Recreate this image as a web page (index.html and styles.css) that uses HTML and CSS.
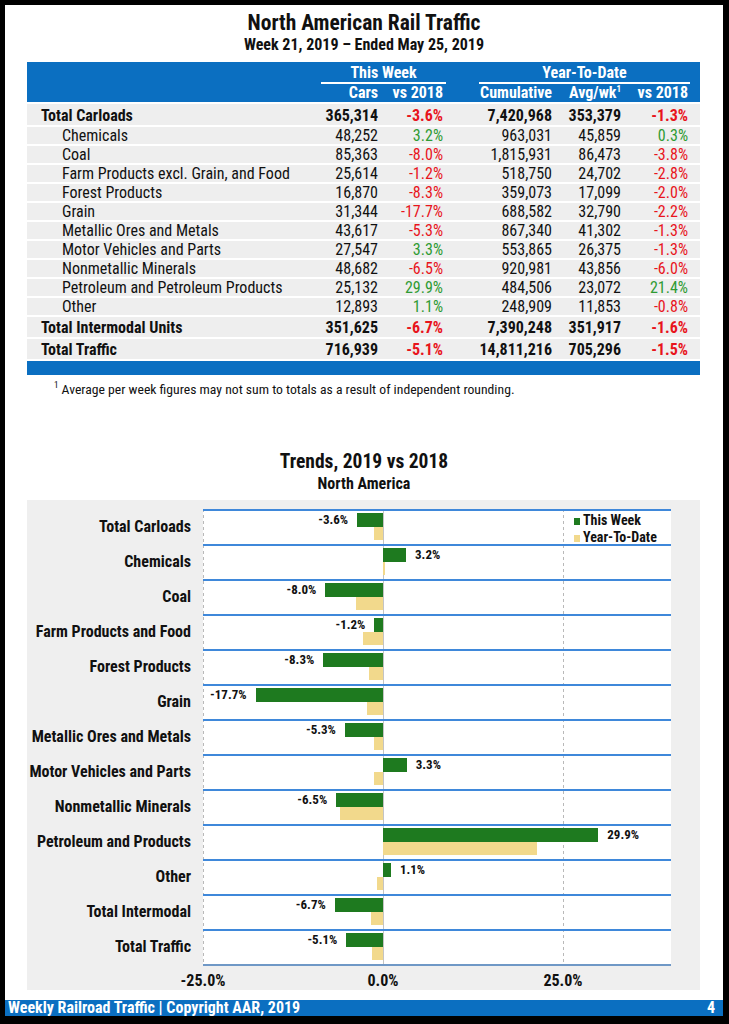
FILE: index.html
```html
<!DOCTYPE html>
<html lang="en">
<head>
<meta charset="utf-8">
<title>North American Rail Traffic</title>
<link rel="stylesheet" href="styles.css">
</head>
<body>
<div class="page">
  <h1 class="title">North American Rail Traffic</h1>
  <div class="subtitle">Week 21, 2019 – Ended May 25, 2019</div>

  <div class="table">
    <div class="thead">
      <div class="hrow1 cols">
        <div class="grp grp-week">This Week</div>
        <div class="grp grp-ytd">Year-To-Date</div>
      </div>
      <div class="hrow2 cols">
        <span></span>
        <span class="num">Cars</span>
        <span class="num">vs 2018</span>
        <span class="num">Cumulative</span>
        <span class="num">Avg/wk<sup>1</sup></span>
        <span class="num">vs 2018</span>
      </div>
    </div>
    <div class="tbody">
      <div class="row cols total tc"><span>Total Carloads</span><span class="num">365,314</span><span class="num neg">-3.6%</span><span class="num">7,420,968</span><span class="num">353,379</span><span class="num neg">-1.3%</span></div>
      <div class="row cols sub"><span>Chemicals</span><span class="num">48,252</span><span class="num pos">3.2%</span><span class="num">963,031</span><span class="num">45,859</span><span class="num pos">0.3%</span></div>
      <div class="row cols sub"><span>Coal</span><span class="num">85,363</span><span class="num neg">-8.0%</span><span class="num">1,815,931</span><span class="num">86,473</span><span class="num neg">-3.8%</span></div>
      <div class="row cols sub"><span>Farm Products excl. Grain, and Food</span><span class="num">25,614</span><span class="num neg">-1.2%</span><span class="num">518,750</span><span class="num">24,702</span><span class="num neg">-2.8%</span></div>
      <div class="row cols sub"><span>Forest Products</span><span class="num">16,870</span><span class="num neg">-8.3%</span><span class="num">359,073</span><span class="num">17,099</span><span class="num neg">-2.0%</span></div>
      <div class="row cols sub"><span>Grain</span><span class="num">31,344</span><span class="num neg">-17.7%</span><span class="num">688,582</span><span class="num">32,790</span><span class="num neg">-2.2%</span></div>
      <div class="row cols sub"><span>Metallic Ores and Metals</span><span class="num">43,617</span><span class="num neg">-5.3%</span><span class="num">867,340</span><span class="num">41,302</span><span class="num neg">-1.3%</span></div>
      <div class="row cols sub"><span>Motor Vehicles and Parts</span><span class="num">27,547</span><span class="num pos">3.3%</span><span class="num">553,865</span><span class="num">26,375</span><span class="num neg">-1.3%</span></div>
      <div class="row cols sub"><span>Nonmetallic Minerals</span><span class="num">48,682</span><span class="num neg">-6.5%</span><span class="num">920,981</span><span class="num">43,856</span><span class="num neg">-6.0%</span></div>
      <div class="row cols sub"><span>Petroleum and Petroleum Products</span><span class="num">25,132</span><span class="num pos">29.9%</span><span class="num">484,506</span><span class="num">23,072</span><span class="num pos">21.4%</span></div>
      <div class="row cols sub"><span>Other</span><span class="num">12,893</span><span class="num pos">1.1%</span><span class="num">248,909</span><span class="num">11,853</span><span class="num neg">-0.8%</span></div>
      <div class="row cols total"><span>Total Intermodal Units</span><span class="num">351,625</span><span class="num neg">-6.7%</span><span class="num">7,390,248</span><span class="num">351,917</span><span class="num neg">-1.6%</span></div>
      <div class="row cols total"><span>Total Traffic</span><span class="num">716,939</span><span class="num neg">-5.1%</span><span class="num">14,811,216</span><span class="num">705,296</span><span class="num neg">-1.5%</span></div>
    </div>
    <div class="tfoot"></div>
  </div>
  <p class="footnote"><sup>1</sup> Average per week figures may not sum to totals as a result of independent rounding.</p>

  <h2 class="chart-title">Trends, 2019 vs 2018</h2>
  <div class="chart-sub">North America</div>

  <div class="chart">
    <div class="chart-grid">
      <div class="cats">
        <div class="cat">Total Carloads</div>
        <div class="cat">Chemicals</div>
        <div class="cat">Coal</div>
        <div class="cat">Farm Products and Food</div>
        <div class="cat">Forest Products</div>
        <div class="cat">Grain</div>
        <div class="cat">Metallic Ores and Metals</div>
        <div class="cat">Motor Vehicles and Parts</div>
        <div class="cat">Nonmetallic Minerals</div>
        <div class="cat">Petroleum and Products</div>
        <div class="cat">Other</div>
        <div class="cat">Total Intermodal</div>
        <div class="cat">Total Traffic</div>
      </div>
      <div class="plot">
        <div class="legend">
          <div class="leg"><i class="sw wk"></i>This Week</div>
          <div class="leg"><i class="sw ytd"></i>Year-To-Date</div>
        </div>
        <div class="band">
          <div class="track neg"><span class="val">-3.6%</span><i class="bar wk" style="width:25.92px"></i></div>
          <div class="track neg"><i class="bar ytd" style="width:9.36px"></i></div>
        </div>
        <div class="band">
          <div class="track pos"><i class="bar wk" style="width:23.04px"></i><span class="val">3.2%</span></div>
          <div class="track pos"><i class="bar ytd" style="width:2.16px"></i></div>
        </div>
        <div class="band">
          <div class="track neg"><span class="val">-8.0%</span><i class="bar wk" style="width:57.6px"></i></div>
          <div class="track neg"><i class="bar ytd" style="width:27.36px"></i></div>
        </div>
        <div class="band">
          <div class="track neg"><span class="val">-1.2%</span><i class="bar wk" style="width:8.64px"></i></div>
          <div class="track neg"><i class="bar ytd" style="width:20.16px"></i></div>
        </div>
        <div class="band">
          <div class="track neg"><span class="val">-8.3%</span><i class="bar wk" style="width:59.76px"></i></div>
          <div class="track neg"><i class="bar ytd" style="width:14.4px"></i></div>
        </div>
        <div class="band">
          <div class="track neg"><span class="val">-17.7%</span><i class="bar wk" style="width:127.44px"></i></div>
          <div class="track neg"><i class="bar ytd" style="width:15.84px"></i></div>
        </div>
        <div class="band">
          <div class="track neg"><span class="val">-5.3%</span><i class="bar wk" style="width:38.16px"></i></div>
          <div class="track neg"><i class="bar ytd" style="width:9.36px"></i></div>
        </div>
        <div class="band">
          <div class="track pos"><i class="bar wk" style="width:23.76px"></i><span class="val">3.3%</span></div>
          <div class="track neg"><i class="bar ytd" style="width:9.36px"></i></div>
        </div>
        <div class="band">
          <div class="track neg"><span class="val">-6.5%</span><i class="bar wk" style="width:46.8px"></i></div>
          <div class="track neg"><i class="bar ytd" style="width:43.2px"></i></div>
        </div>
        <div class="band">
          <div class="track pos"><i class="bar wk" style="width:215.28px"></i><span class="val">29.9%</span></div>
          <div class="track pos"><i class="bar ytd" style="width:154.08px"></i></div>
        </div>
        <div class="band">
          <div class="track pos"><i class="bar wk" style="width:7.92px"></i><span class="val">1.1%</span></div>
          <div class="track neg"><i class="bar ytd" style="width:5.76px"></i></div>
        </div>
        <div class="band">
          <div class="track neg"><span class="val">-6.7%</span><i class="bar wk" style="width:48.24px"></i></div>
          <div class="track neg"><i class="bar ytd" style="width:11.52px"></i></div>
        </div>
        <div class="band">
          <div class="track neg"><span class="val">-5.1%</span><i class="bar wk" style="width:36.72px"></i></div>
          <div class="track neg"><i class="bar ytd" style="width:10.8px"></i></div>
        </div>
      </div>
    </div>
    <div class="axis">
      <span></span>
      <div class="ticks">
        <span class="tick t1">-25.0%</span>
        <span class="tick t2">0.0%</span>
        <span class="tick t3">25.0%</span>
      </div>
    </div>
  </div>

  <div class="footer">
    <span>Weekly Railroad Traffic | Copyright AAR, 2019</span>
    <span>4</span>
  </div>
</div>
</body>
</html>
```

FILE: styles.css
```css
html, body {
  margin: 0;
  padding: 0;
  background: #000;
}

body {
  font-family: Roboto, "Liberation Sans", Arial, sans-serif;
  font-stretch: 75%;
  color: #111;
}

.page {
  box-sizing: border-box;
  width: 718px;
  height: 1011px;
  margin: 5px 0 0 5px;
  padding-top: 5px;
  background: #fff;
  display: flex;
  flex-direction: column;
}

.title {
  margin: 0;
  text-align: center;
  font-size: 21.5px;
  line-height: 25px;
  font-weight: 700;
}

.subtitle {
  text-align: center;
  font-size: 16px;
  line-height: 20px;
  font-weight: 700;
}

/* ---------- table ---------- */
.table {
  margin: 7px 23px 0 22px;
}

.cols {
  display: grid;
  grid-template-columns: 276px 61px 65px 109px 69px 67px;
  padding: 0 12px 0 14px;
}

.num {
  text-align: right;
  white-space: nowrap;
}

.thead {
  background: #0b6fc1;
  color: #fff;
  font-weight: 700;
  font-size: 16px;
  height: 40px;
}

.hrow1 {
  height: 22px;
}

.grp {
  text-align: center;
  padding-top: 1px;
  line-height: 19px;
  border-bottom: 2px solid #fff;
}

.grp-week {
  grid-column: 2 / 4;
  margin: 0 -3px 0 4px;
}

.grp-ytd {
  grid-column: 4 / 7;
  margin: 0 -2px 0 36px;
}

.hrow2 {
  line-height: 18px;
}

.hrow2 sup,
.footnote sup {
  font-size: 9px;
  line-height: 0;
  vertical-align: 6px;
}

.tbody {
  padding-top: 2px;
  background: #fff;
}

.row {
  background: #eeeeee;
  font-size: 16px;
  line-height: 17px;
  margin-bottom: 2px;
}

.row.total {
  font-weight: 700;
  padding-top: 1px;
  line-height: 19px;
}

.row.total.tc {
  padding-top: 2px;
}

.row.sub > span:first-child {
  padding-left: 21px;
  white-space: nowrap;
}

.neg {
  color: #e8141c;
}

.pos {
  color: #2e9b33;
}

.tfoot {
  height: 14px;
  background: #0b6fc1;
}

.footnote {
  margin: 5px 0 0;
  padding-left: 49px;
  font-size: 13.7px;
  line-height: 18px;
}

/* ---------- chart ---------- */
.chart-title {
  margin: 52px 0 0;
  text-align: center;
  font-size: 19.5px;
  line-height: 24px;
  font-weight: 700;
}

.chart-sub {
  text-align: center;
  font-size: 16px;
  line-height: 20px;
  font-weight: 700;
}

.chart {
  box-sizing: border-box;
  height: 490px;
  margin: 6px 23px 0 22px;
  padding-top: 9px;
  background: #efefef;
}

.chart-grid {
  display: grid;
  grid-template-columns: 176px 468px;
}

.cat {
  box-sizing: border-box;
  height: 35px;
  display: flex;
  align-items: center;
  justify-content: flex-end;
  padding-right: 12px;
  font-size: 16px;
  font-weight: 700;
  white-space: nowrap;
}

.plot {
  position: relative;
  background:
    linear-gradient(#c4c4c4, #c4c4c4) 180px 0 / 1px 100% no-repeat,
    repeating-linear-gradient(to bottom, #b9b9b9 0 3px, transparent 3px 6px) 0 0 / 1px 100% no-repeat,
    repeating-linear-gradient(to bottom, #b9b9b9 0 3px, transparent 3px 6px) 360px 0 / 1px 100% no-repeat,
    #fff;
}

.band {
  box-sizing: border-box;
  height: 35px;
  border-top: 2px solid #3f88da;
  padding-top: 2px;
}

.band:last-child {
  height: 37px;
  border-bottom: 2px solid #6f98c6;
}

.track {
  height: 13.5px;
  display: flex;
  align-items: center;
}

.track.neg {
  width: 180px;
  justify-content: flex-end;
}

.track.pos {
  margin-left: 180px;
}

.bar {
  display: block;
  height: 100%;
  flex: none;
}

.wk {
  background: #1e7a1f;
}

.ytd {
  background: #f2d98c;
}

.val {
  font-size: 13px;
  font-weight: 700;
  line-height: 13.5px;
  white-space: nowrap;
  color: #111;
}

.track.neg .val {
  margin-right: 9px;
}

.track.pos .val {
  margin-left: 9px;
}

.legend {
  position: absolute;
  top: 3px;
  left: 371px;
  font-size: 14px;
  font-weight: 700;
  line-height: 17px;
}

.leg {
  display: flex;
  align-items: center;
  white-space: nowrap;
}

.sw {
  display: block;
  width: 6px;
  height: 7px;
  margin: 2px 3px 0 0;
}

.axis {
  display: grid;
  grid-template-columns: 176px 468px;
  margin-top: 6px;
}

.ticks {
  display: flex;
}

.tick {
  width: 60px;
  flex: none;
  text-align: center;
  font-size: 16px;
  font-weight: 700;
  line-height: 18px;
}

.t1 {
  margin-left: -30px;
}

.t2,
.t3 {
  margin-left: 120px;
}

/* ---------- footer ---------- */
.footer {
  margin-top: auto;
  height: 16px;
  background: #0b6fc1;
  color: #fff;
  font-size: 16px;
  font-weight: 700;
  line-height: 16px;
  padding: 0 8px 0 3px;
  display: flex;
  justify-content: space-between;
}
```
